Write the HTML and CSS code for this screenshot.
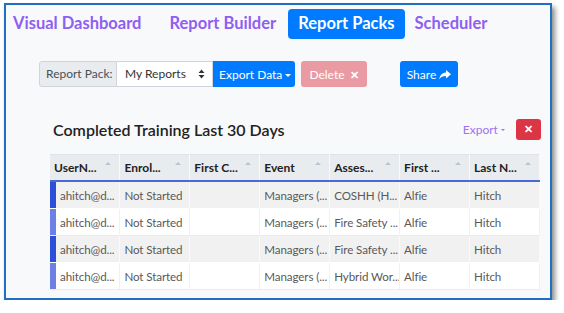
FILE: index.html
```html
<!DOCTYPE html>
<html lang="en">
<head>
  <meta charset="UTF-8">
  <title>Report Packs</title>
  <link rel="stylesheet" href="styles.css">
</head>
<body>

<div class="frame">
  <nav class="tabs">
    <a class="tab">Visual Dashboard</a>
    <a class="tab">Report Builder</a>
    <a class="tab active">Report Packs</a>
    <a class="tab">Scheduler</a>
  </nav>

  <div class="toolbar">
    <div class="input-group">
      <span class="group-label">Report Pack:</span>
      <div class="select">My Reports
        <svg width="7" height="10" viewBox="0 0 7 10"><path d="M3.5 0.5 L6.5 4 H0.5 Z M3.5 9.5 L6.5 6 H0.5 Z" fill="#333"/></svg>
      </div>
      <button class="btn btn-blue">Export Data <span class="caret"></span></button>
    </div>
    <button class="btn btn-delete">Delete <span class="x">✕</span></button>
    <button class="btn btn-blue share">Share
      <svg width="12" height="10" viewBox="0 0 12 10"><path d="M7 0 L12 4.2 L7 8.4 V6 C3.8 6 1.8 6.8 0.3 9.5 C0.6 5.5 2.8 2.8 7 2.4 Z" fill="#fff"/></svg>
    </button>
  </div>

  <div class="panel-head">
    <h3>Completed Training Last 30 Days</h3>
    <a class="export-link">Export <span class="caret"></span></a>
    <button class="close-btn">✕</button>
  </div>

  <table class="grid">
    <thead>
      <tr>
        <th>UserN...</th><th>Enrol...</th><th>First C...</th><th>Event</th><th>Asses...</th><th>First ...</th><th>Last N...</th>
      </tr>
    </thead>
    <tbody>
      <tr class="odd"><td class="first">ahitch@d...</td><td>Not Started</td><td></td><td>Managers (...</td><td>COSHH (H...</td><td>Alfie</td><td>Hitch</td></tr>
      <tr class="even"><td class="first">ahitch@d...</td><td>Not Started</td><td></td><td>Managers (...</td><td>Fire Safety ...</td><td>Alfie</td><td>Hitch</td></tr>
      <tr class="odd"><td class="first">ahitch@d...</td><td>Not Started</td><td></td><td>Managers (...</td><td>Fire Safety ...</td><td>Alfie</td><td>Hitch</td></tr>
      <tr class="even"><td class="first">ahitch@d...</td><td>Not Started</td><td></td><td>Managers (...</td><td>Hybrid Wor...</td><td>Alfie</td><td>Hitch</td></tr>
    </tbody>
  </table>
</div>

</body>
</html>
```

FILE: styles.css
```css
body {
  margin: 0;
  background-color: #fff;
  font-family: Lato, 'Noto Sans', sans-serif;
  color: #212529;
}
.frame {
  margin: 3px 0 0 4px;
  width: 544px;
  height: 293px;
  border: 2px solid #1f6fc5;
  background-color: #f8f9fa;
  box-shadow: 3px 4px 5px rgba(0,0,0,0.45);
  overflow: hidden;
}
.tabs {
  display: flex;
  align-items: center;
  padding: 3px 0 0 7px;
  height: 32px;
  white-space: nowrap;
}
.tab {
  font-size: 16.5px;
  font-weight: 700;
  color: #8f5ef2;
  padding: 4px 10px 5px;
  border-radius: 4px;
  line-height: 21px;
}
.tab:first-child {
  padding-left: 0;
  margin-right: 8px;
}
.tab:nth-child(2) {
  padding-right: 12px;
}
.tab.active {
  background-color: #007bff;
  color: #fff;
}
.toolbar {
  display: flex;
  align-items: center;
  margin: 21px 0 0 33px;
  height: 26px;
  white-space: nowrap;
}
.input-group {
  display: flex;
  height: 26px;
}
.group-label {
  background-color: #e9ecef;
  border: 1px solid #ced4da;
  border-radius: 3px 0 0 3px;
  font-size: 12px;
  color: #495057;
  padding: 0 6px;
  line-height: 24px;
  width: 64px;
}
.select {
  background-color: #fff;
  border: 1px solid #ced4da;
  border-left: none;
  font-size: 12px;
  color: #333;
  padding: 0 7px 0 8px;
  line-height: 24px;
  width: 80px;
  display: flex;
  align-items: center;
  justify-content: space-between;
}
.btn {
  border: none;
  border-radius: 3px;
  font-family: inherit;
  font-size: 12px;
  height: 26px;
  padding: 0 6px;
  color: #fff;
  white-space: nowrap;
}
.btn-blue {
  background-color: #007bff;
}
.input-group .btn {
  border-radius: 0 3px 3px 0;
  width: 82px;
}
.caret {
  display: inline-block;
  width: 0;
  height: 0;
  border-left: 3px solid transparent;
  border-right: 3px solid transparent;
  border-top: 3px solid currentColor;
  vertical-align: 2px;
}
.btn-delete {
  background-color: #ea9aa2;
  margin-left: 6px;
  width: 66px;
}
.btn-delete .x {
  font-weight: bold;
  font-size: 11px;
  margin-left: 2px;
}
.share {
  margin-left: 33px;
  width: 58px;
  padding: 0 5px;
}
.share svg {
  vertical-align: -1px;
}
.panel-head {
  display: flex;
  align-items: center;
  margin: 31px 0 0 47px;
  height: 22px;
}
.panel-head h3 {
  margin: 0;
  font-size: 16px;
  font-weight: 600;
  color: #222;
  flex: 1;
}
.export-link {
  font-size: 12px;
  color: #9d73f0;
  margin-right: 11px;
}
.export-link .caret {
  border-width: 2.5px;
  vertical-align: 3px;
}
.close-btn {
  background-color: #dc3545;
  color: #fff;
  border: none;
  border-radius: 3px;
  width: 25px;
  height: 21px;
  font-size: 11px;
  font-weight: bold;
  margin-right: 9px;
  padding: 0;
}
.grid {
  margin: 14px 0 0 44px;
  width: 490px;
  border-collapse: collapse;
  table-layout: fixed;
  font-size: 12px;
}
.grid th {
  background-color: #e9ecef;
  text-align: left;
  font-weight: 700;
  color: #222;
  height: 25px;
  padding: 0 3px 0 4px;
  border-top: 1px solid #dee2e6;
  border-right: 1px solid #f8f9fa;
  border-bottom: 2px solid #4a68d8;
  position: relative;
  white-space: nowrap;
}
.grid th::after {
  content: "";
  position: absolute;
  right: 8px;
  top: 7px;
  border-left: 3px solid transparent;
  border-right: 3px solid transparent;
  border-bottom: 3px solid #b8c4d6;
}
.grid td {
  height: 26px;
  padding: 0 2px 0 4px;
  font-size: 11.6px;
  letter-spacing: -0.1px;
  color: #595959;
  border-right: 1px solid #fff;
  border-bottom: 1px solid #fff;
  white-space: nowrap;
  overflow: hidden;
}
.grid tr.odd td {
  background-color: #f1f1f1;
  border-right-color: #fafafa;
}
.grid tr.even td {
  background-color: #fff;
  border-right-color: #f1f1f1;
  border-bottom-color: #ebebeb;
}
.grid td.first {
  padding-left: 10px;
  box-shadow: inset 6px 0 0 #2d4fd8;
}
.grid tr.even td.first {
  box-shadow: inset 6px 0 0 #6c80e6;
}
```
